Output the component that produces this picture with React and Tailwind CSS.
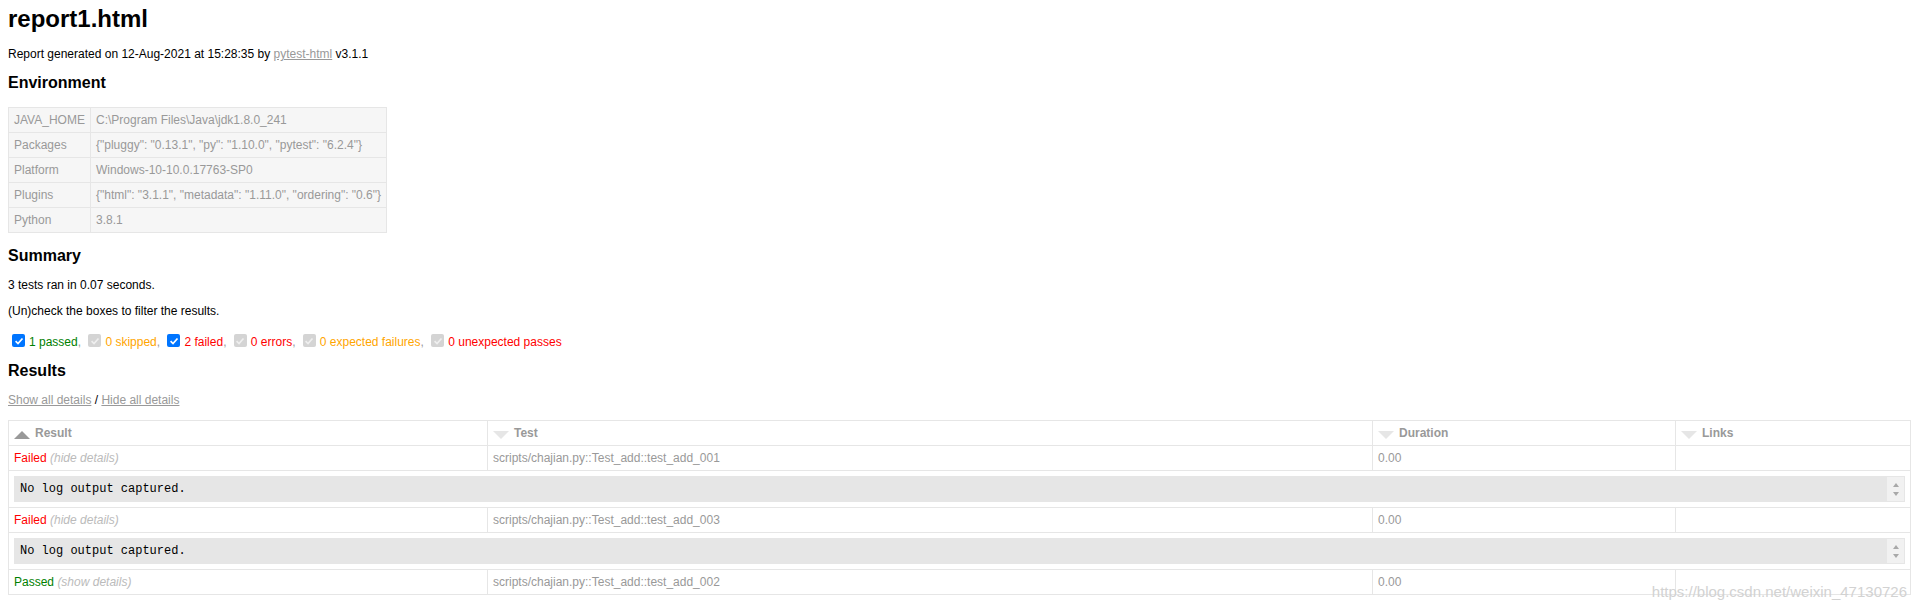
// pytest-html report page

const envRows = [
    ["JAVA_HOME", "C:\\Program Files\\Java\\jdk1.8.0_241"],
    ["Packages", '{"pluggy": "0.13.1", "py": "1.10.0", "pytest": "6.2.4"}'],
    ["Platform", "Windows-10-10.0.17763-SP0"],
    ["Plugins", '{"html": "3.1.1", "metadata": "1.11.0", "ordering": "0.6"}'],
    ["Python", "3.8.1"],
];

const filters = [
    { label: "1 passed", color: "text-[#008000]", enabled: true },
    { label: "0 skipped", color: "text-[#ffa500]", enabled: false },
    { label: "2 failed", color: "text-[#ff0000]", enabled: true },
    { label: "0 errors", color: "text-[#ff0000]", enabled: false },
    { label: "0 expected failures", color: "text-[#ffa500]", enabled: false },
    { label: "0 unexpected passes", color: "text-[#ff0000]", enabled: false },
];

const results = [
    { status: "Failed", color: "text-[#ff0000]", expander: "(hide details)", test: "scripts/chajian.py::Test_add::test_add_001", duration: "0.00", log: true },
    { status: "Failed", color: "text-[#ff0000]", expander: "(hide details)", test: "scripts/chajian.py::Test_add::test_add_003", duration: "0.00", log: true },
    { status: "Passed", color: "text-[#008000]", expander: "(show details)", test: "scripts/chajian.py::Test_add::test_add_002", duration: "0.00", log: false },
];

function Check({ enabled }) {
    return (
        <span className={enabled
            ? "flex items-center justify-center w-[13px] h-[13px] -mt-px ml-[4px] mr-[4px] rounded-[2px] bg-[#0075ff]"
            : "flex items-center justify-center w-[13px] h-[13px] -mt-px ml-[4px] mr-[4px] rounded-[2px] bg-[#d4d4d4]"}>
            <svg width="10" height="10" viewBox="0 0 10 10">
                <path d="M1.6 5.2 L4 7.5 L8.5 2.5" fill="none" stroke={enabled ? "#ffffff" : "#efefef"} strokeWidth="1.7" />
            </svg>
        </span>
    );
}

function SortIcon({ active }) {
    return active
        ? <span className="w-0 h-0 mt-[5px] mr-[5px] border-x-8 border-x-transparent border-b-8 border-b-[#999999]" />
        : <span className="w-0 h-0 mt-[5px] mr-[5px] border-x-8 border-x-transparent border-t-8 border-t-[#e6e6e6]" />;
}

function LogBox() {
    return (
        <div className="flex border border-[#e6e6e6] bg-[#e6e6e6]">
            <div className="flex-1 p-[5px] leading-[14px] text-[12px] text-black font-['Liberation_Mono','Courier_New',monospace] whitespace-pre-wrap">
                No log output captured.
            </div>
            <div className="w-[17px] bg-[#f1f1f1] flex flex-col items-center justify-center gap-[5px]">
                <span className="w-0 h-0 border-x-[3px] border-x-transparent border-b-[4px] border-b-[#a8a8a8]" />
                <span className="w-0 h-0 border-x-[3px] border-x-transparent border-t-[4px] border-t-[#a8a8a8]" />
            </div>
        </div>
    );
}

function App() {
    const cell = "p-[5px] border border-[#e6e6e6] leading-[14px] text-left align-top";

    return (
        <div className="relative min-h-[612px] px-2 bg-white text-[12px] text-[#999999] font-['Liberation_Sans',Arial,sans-serif]">
            <h1 className="pt-[5px] text-[24px] leading-[28px] font-bold text-black">report1.html</h1>
            <p className="mt-[14px] leading-[14px] text-black">
                Report generated on 12-Aug-2021 at 15:28:35 by <a href="#" className="text-[#999999] underline">pytest-html</a> v3.1.1
            </p>

            <h2 className="mt-[13px] text-[16px] leading-[18px] font-bold text-black">Environment</h2>
            <table className="mt-[15px] w-[379px] table-fixed border-collapse">
                <colgroup>
                    <col className="w-[82px]" />
                    <col />
                </colgroup>
                <tbody>
                    {envRows.map(([key, value]) => (
                        <tr key={key} className="bg-[#f6f6f6]">
                            <td className={cell}>{key}</td>
                            <td className={cell + " whitespace-nowrap"}>{value}</td>
                        </tr>
                    ))}
                </tbody>
            </table>

            <h2 className="mt-[14px] text-[16px] leading-[18px] font-bold text-black">Summary</h2>
            <p className="mt-[13px] leading-[14px] text-black">3 tests ran in 0.07 seconds.</p>
            <p className="mt-[12px] leading-[14px] text-black">(Un)check the boxes to filter the results.</p>

            <div className="mt-[17px] h-[14px] flex items-start leading-[14px]">
                {filters.map((f, i) => (
                    <div key={f.label} className="flex items-start">
                        <Check enabled={f.enabled} />
                        <span className={f.color}>{f.label}</span>
                        {i < filters.length - 1 && <span className="whitespace-pre">, </span>}
                    </div>
                ))}
            </div>

            <h2 className="mt-[13px] text-[16px] leading-[18px] font-bold text-black">Results</h2>
            <p className="mt-[13px] leading-[14px] text-black">
                <a href="#" className="text-[#999999] underline">Show all details</a> / <a href="#" className="text-[#999999] underline">Hide all details</a>
            </p>

            <table className="mt-[13px] w-[1903px] table-fixed border-collapse border border-[#e6e6e6]">
                <colgroup>
                    <col className="w-[479px]" />
                    <col className="w-[885px]" />
                    <col className="w-[303px]" />
                    <col />
                </colgroup>
                <thead>
                    <tr>
                        <th className={cell + " font-bold"}><div className="flex items-start"><SortIcon active />Result</div></th>
                        <th className={cell + " font-bold"}><div className="flex items-start"><SortIcon />Test</div></th>
                        <th className={cell + " font-bold"}><div className="flex items-start"><SortIcon />Duration</div></th>
                        <th className={cell + " font-bold"}><div className="flex items-start"><SortIcon />Links</div></th>
                    </tr>
                </thead>
                <tbody>
                    {results.map((r) => (
                        <>
                            <tr key={r.test}>
                                <td className={cell}>
                                    <span className={r.color}>{r.status}</span>
                                    <span className="italic text-[#bbbbbb]"> {r.expander}</span>
                                </td>
                                <td className={cell}>{r.test}</td>
                                <td className={cell}>{r.duration}</td>
                                <td className={cell}></td>
                            </tr>
                            {r.log && (
                                <tr key={r.test + "-log"}>
                                    <td colSpan={4} className="p-[5px] border border-[#e6e6e6]">
                                        <LogBox />
                                    </td>
                                </tr>
                            )}
                        </>
                    ))}
                </tbody>
            </table>

            <div className="absolute right-[9px] top-[583px] text-[15px] leading-[18px] text-[#d2d2d2]">
                https://blog.csdn.net/weixin_47130726
            </div>
        </div>
    );
}

export default App
